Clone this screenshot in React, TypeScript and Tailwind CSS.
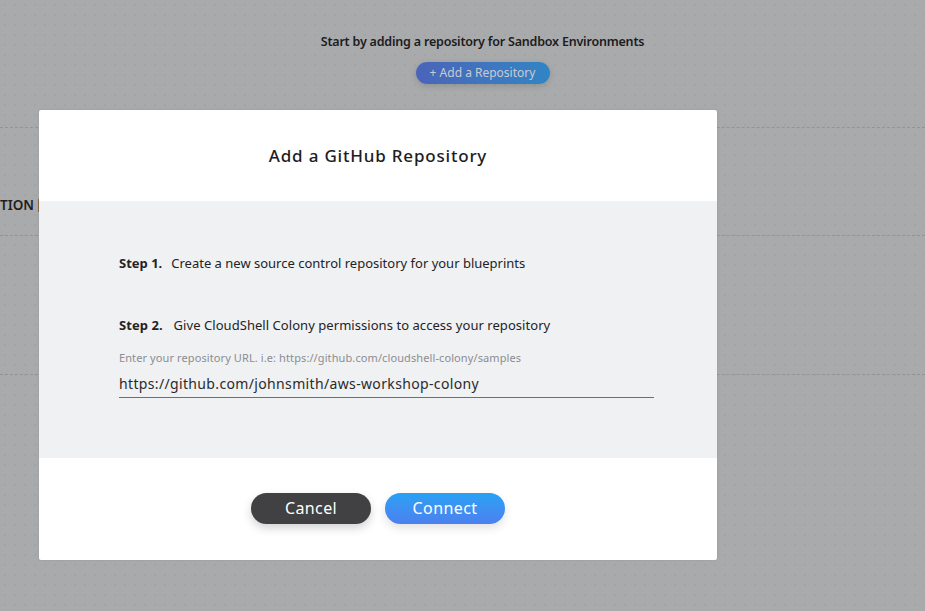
import React from 'react'

export default function App() {
  return (
    <div
      className="relative w-[925px] h-[611px] overflow-hidden bg-[#a9aaac] bg-[radial-gradient(#a3a4a6_1px,transparent_1px)] bg-[size:10px_10px]"
      style={{ fontFamily: '"Noto Sans", "Open Sans", sans-serif' }}
    >
      {/* Page behind the overlay */}
      <div className="flex flex-col">
        <div className="flex flex-col items-center pt-[33px] pl-[40px]">
          <p className="text-[12.5px] font-semibold text-[#1c1c1d] tracking-[-0.2px]">
            Start by adding a repository for Sandbox Environments
          </p>
          <button className="mt-[10px] h-[22px] w-[134px] rounded-full bg-gradient-to-r from-[#4a64b9] to-[#2f85c4] text-[12px] text-[#c9cbd3] shadow-[0_2px_6px_rgba(0,0,0,0.15)]">
            + Add a Repository
          </button>
        </div>
        <div className="mt-[43px] border-t border-dashed border-[#939496]" />
        <div className="h-[107px] flex items-end pb-[20px]">
          <span className="text-[13.5px] font-semibold text-[#1f1f20]">TION</span>
          <span className="ml-[4px] mb-[3px] w-[2px] h-[13px] bg-[#8a6a4a]" />
        </div>
        <div className="border-t border-dashed border-[#939496]" />
        <div className="h-[138px]" />
        <div className="border-t border-dashed border-[#939496]" />
      </div>

      {/* Modal */}
      <div className="absolute left-[39px] top-[110px] w-[678px] h-[450px] rounded-[2px] bg-white overflow-hidden flex flex-col shadow-[0_0_3px_rgba(0,0,0,0.1)]">
        <div className="h-[91px] flex items-center justify-center">
          <h2 className="text-[17px] font-medium text-[#1d1d1f] tracking-[0.8px]">
            Add a GitHub Repository
          </h2>
        </div>
        <div className="h-[257px] bg-[#f0f1f3] pl-[80px] pt-[53px] flex flex-col">
          <p className="text-[13px] text-[#232325]">
            <span className="font-bold">Step 1.</span>
            <span className="ml-[9px]">Create a new source control repository for your blueprints</span>
          </p>
          <p className="mt-[42px] text-[13px] text-[#232325] tracking-[0.05px]">
            <span className="font-bold">Step 2.</span>
            <span className="ml-[11px]">Give CloudShell Colony permissions to access your repository</span>
          </p>
          <p className="mt-[15px] text-[11px] text-[#8b8d92] tracking-[0.1px]">
            Enter your repository URL. i.e: https://github.com/cloudshell-colony/samples
          </p>
          <div className="mt-[6px] w-[535px] border-b border-[#6e6e70] pb-[3px] text-[14px] text-[#2a2a2c] tracking-[0.35px]">
            https://github.com/johnsmith/aws-workshop-colony
          </div>
        </div>
        <div className="flex-1 flex items-center justify-center gap-[14px] pb-[2px]">
          <button className="w-[120px] h-[31px] rounded-full bg-[#414042] text-white text-[16px] tracking-[0.4px] shadow-[0_4px_10px_rgba(0,0,0,0.18)]">
            Cancel
          </button>
          <button className="w-[120px] h-[31px] rounded-full bg-gradient-to-b from-[#26a1f5] to-[#4b80ef] text-white text-[16px] tracking-[0.4px] shadow-[0_4px_10px_rgba(0,0,0,0.12)]">
            Connect
          </button>
        </div>
      </div>
    </div>
  )
}
